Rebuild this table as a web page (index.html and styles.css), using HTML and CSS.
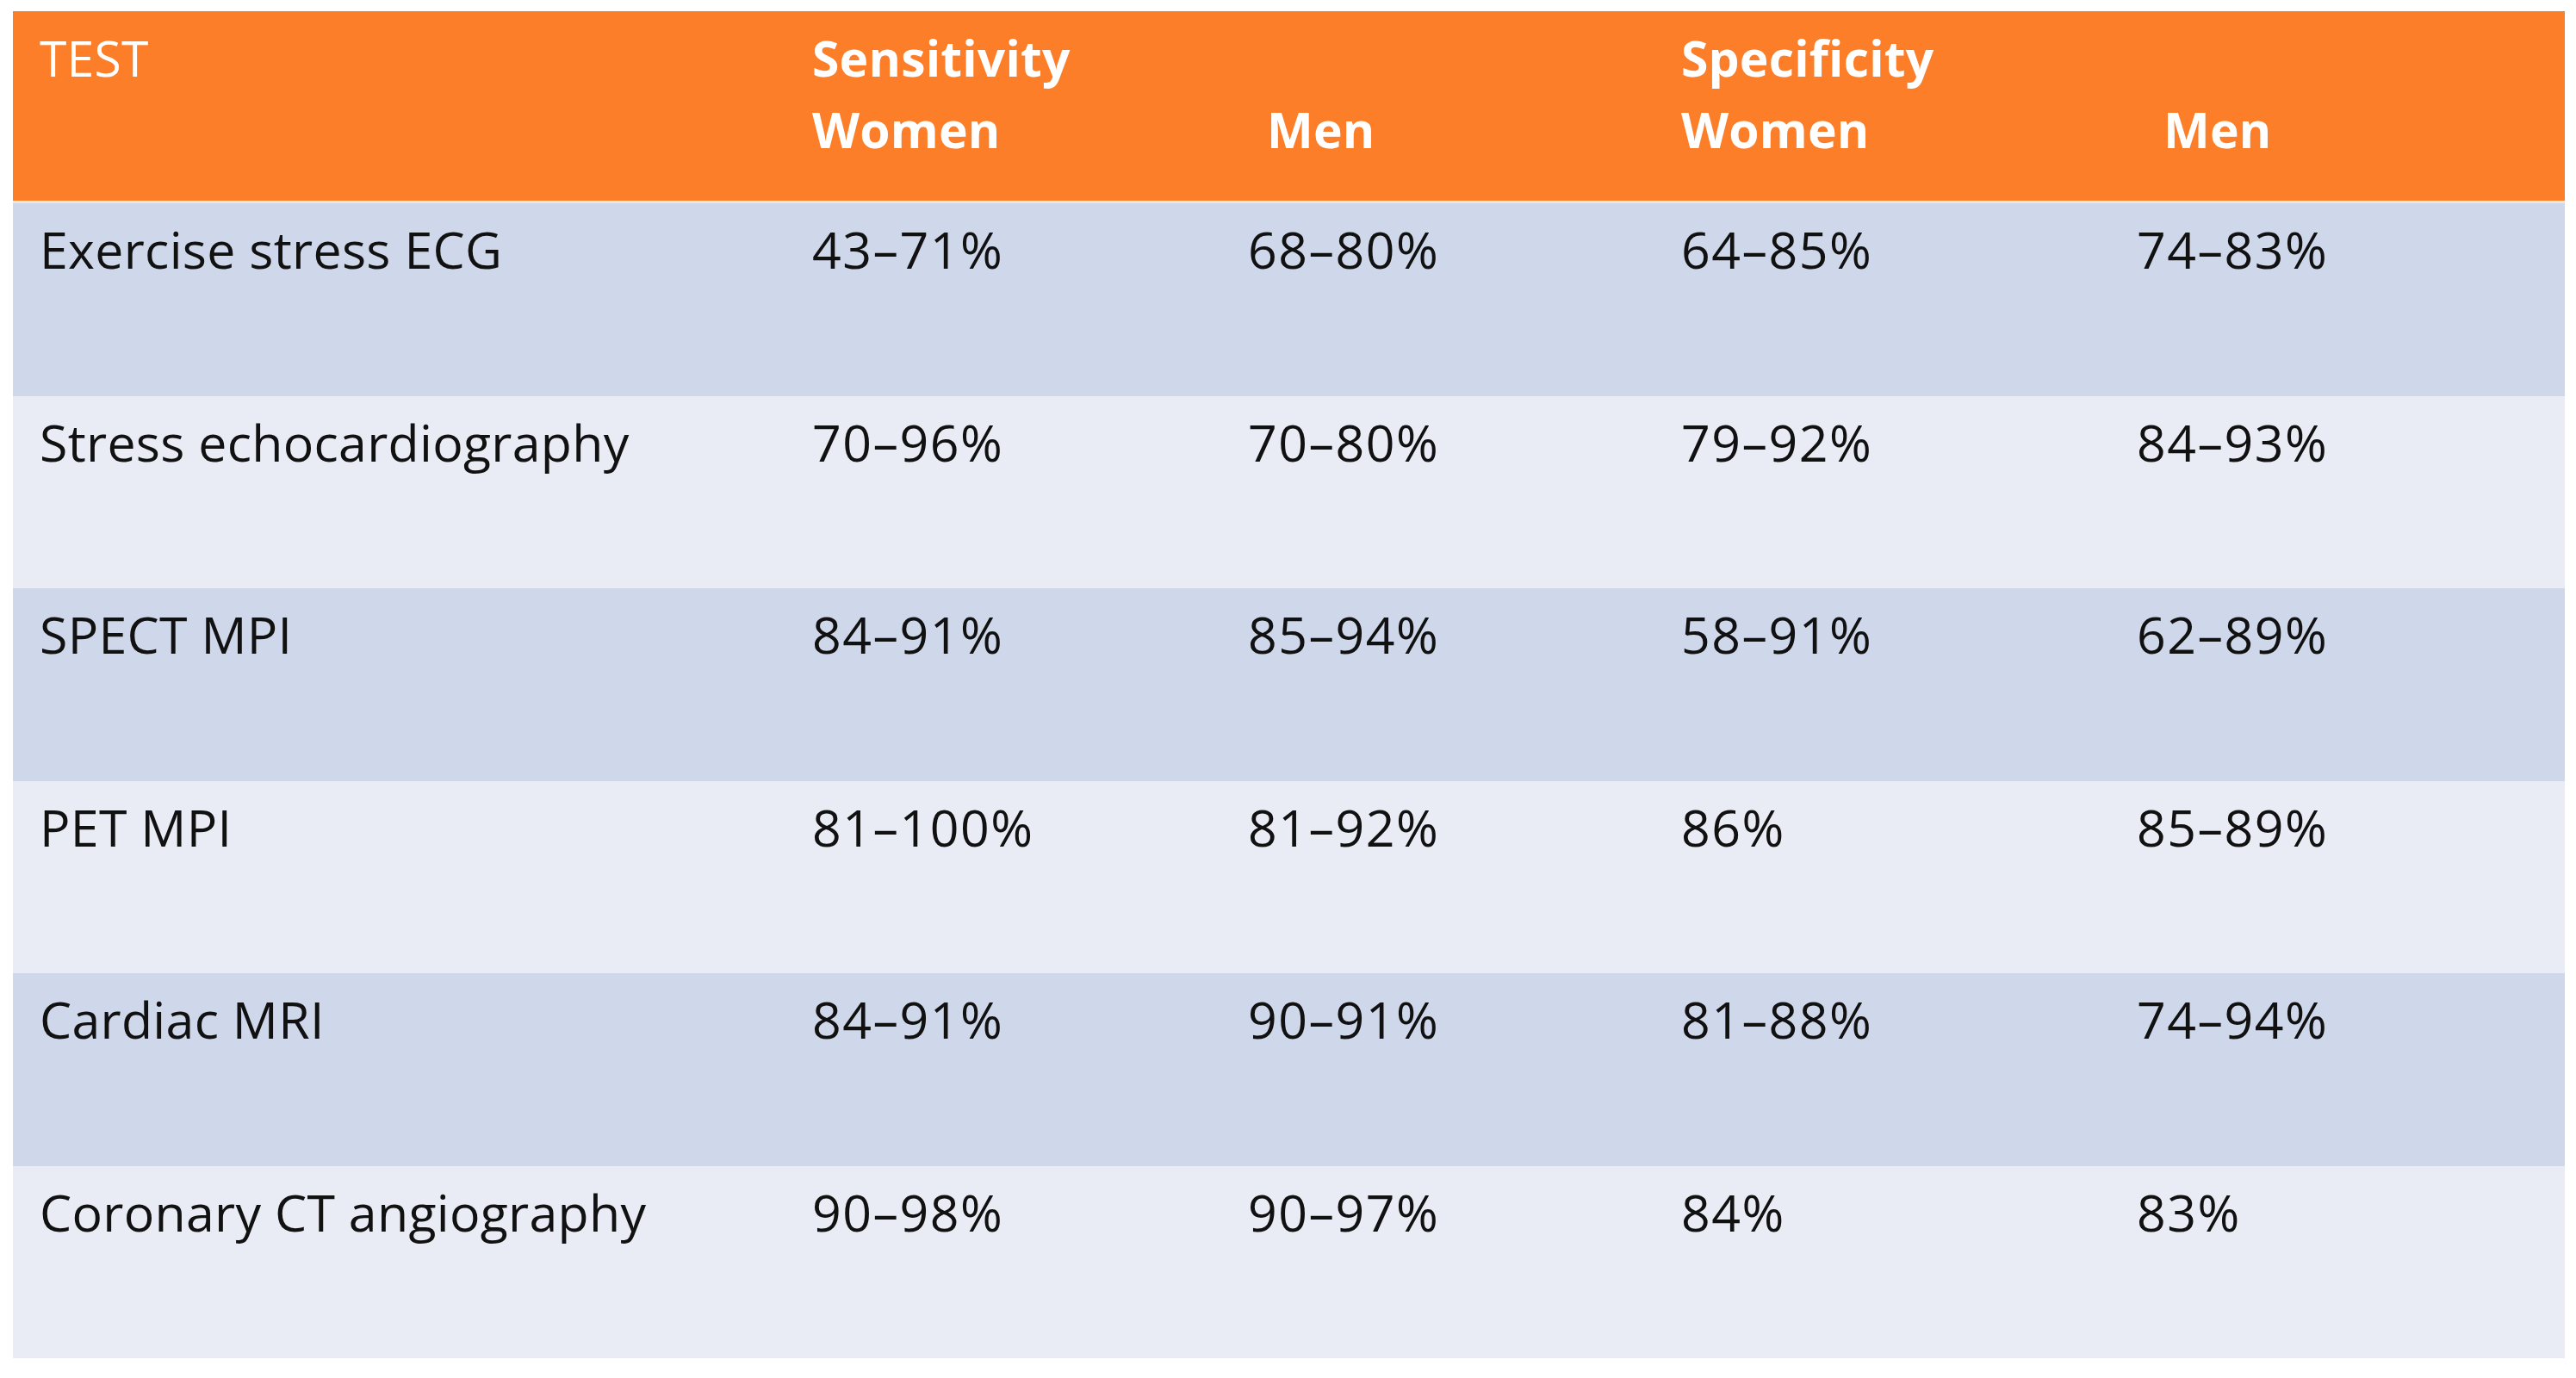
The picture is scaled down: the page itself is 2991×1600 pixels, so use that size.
FILE: index.html
```html
<!DOCTYPE html>
<html lang="en">
<head>
<meta charset="utf-8">
<title>Diagnostic test accuracy by sex</title>
<link rel="stylesheet" href="styles.css">
</head>
<body>
<div class="table">
  <div class="row head">
    <div class="cell test">TEST</div>
    <div class="cell"><div>Sensitivity</div><div>Women</div></div>
    <div class="cell men1"><div>&nbsp;</div><div>Men</div></div>
    <div class="cell"><div>Specificity</div><div>Women</div></div>
    <div class="cell men2"><div>&nbsp;</div><div>Men</div></div>
  </div>
  <div class="row dark">
    <div class="cell">Exercise stress ECG</div>
    <div class="cell">43–71%</div>
    <div class="cell">68–80%</div>
    <div class="cell">64–85%</div>
    <div class="cell">74–83%</div>
  </div>
  <div class="row light">
    <div class="cell">Stress echocardiography</div>
    <div class="cell">70–96%</div>
    <div class="cell">70–80%</div>
    <div class="cell">79–92%</div>
    <div class="cell">84–93%</div>
  </div>
  <div class="row dark">
    <div class="cell">SPECT MPI</div>
    <div class="cell">84–91%</div>
    <div class="cell">85–94%</div>
    <div class="cell">58–91%</div>
    <div class="cell">62–89%</div>
  </div>
  <div class="row light">
    <div class="cell">PET MPI</div>
    <div class="cell">81–100%</div>
    <div class="cell">81–92%</div>
    <div class="cell">86%</div>
    <div class="cell">85–89%</div>
  </div>
  <div class="row dark">
    <div class="cell">Cardiac MRI</div>
    <div class="cell">84–91%</div>
    <div class="cell">90–91%</div>
    <div class="cell">81–88%</div>
    <div class="cell">74–94%</div>
  </div>
  <div class="row light">
    <div class="cell">Coronary CT angiography</div>
    <div class="cell">90–98%</div>
    <div class="cell">90–97%</div>
    <div class="cell">84%</div>
    <div class="cell">83%</div>
  </div>
</div>
</body>
</html>
```

FILE: styles.css
```css
html, body {
  margin: 0;
  padding: 0;
  background: #ffffff;
}

body {
  font-family: "Open Sans", "Noto Sans", sans-serif;
  color: #111111;
}

.table {
  margin: 13px 0 0 15px;
  width: 2963px;
  display: flex;
  flex-direction: column;
}

.row {
  display: grid;
  grid-template-columns: 897px 506px 503px 529px 528px;
}

.cell {
  padding: 12px 0 0 31px;
  font-size: 59px;
  line-height: 83px;
  letter-spacing: 0.3px;
  white-space: nowrap;
}

.row:not(.head) .cell + .cell {
  letter-spacing: 1.5px;
}

.head {
  height: 220px;
  background: #fd7e28;
  border-bottom: 3px solid #fde3d2;
  color: #ffffff;
  font-weight: 700;
}

.head .cell {
  padding-top: 13px;
  font-size: 57px;
  letter-spacing: 0.2px;
}

.head .test {
  font-weight: 400;
}

.head .men1 {
  padding-left: 53px;
}

.head .men2 {
  padding-left: 62px;
}

.dark {
  height: 223.5px;
  background: #cfd7ea;
}

.light {
  height: 223.5px;
  background: #e9ebf5;
}
```
